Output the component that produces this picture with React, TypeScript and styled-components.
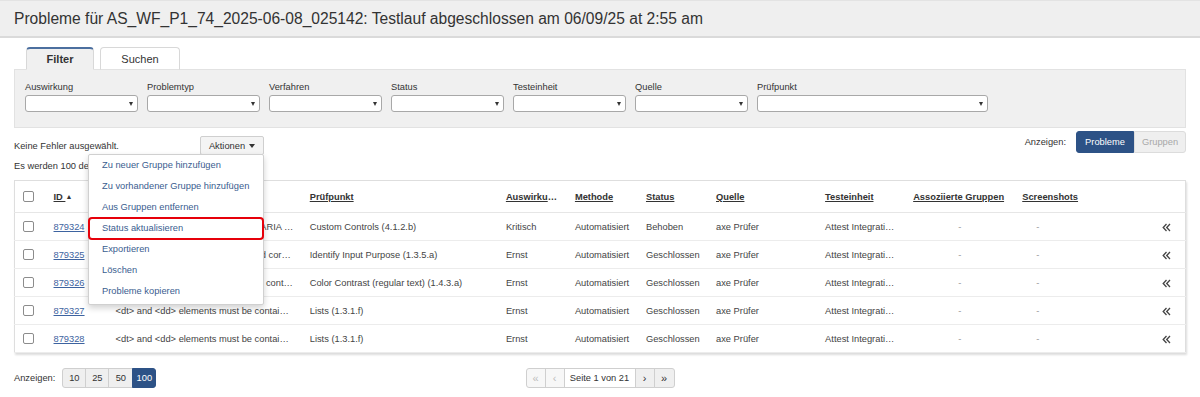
import React from "react";
import styled, { createGlobalStyle } from "styled-components";

const GlobalStyle = createGlobalStyle`
  body {
    margin: 0;
    background: #fff;
    font-family: "Liberation Sans", Arial, sans-serif;
    color: #333;
  }
`;

interface Row {
  id: string;
  desc: string;
  check: string;
  impact: string;
  status: string;
}

const rows: Row[] = [
  { id: "879324", desc: "Elements must only use supported ARIA attributes", check: "Custom Controls (4.1.2.b)", impact: "Kritisch", status: "Behoben" },
  { id: "879325", desc: "autocomplete attribute must be used correctly", check: "Identify Input Purpose (1.3.5.a)", impact: "Ernst", status: "Geschlossen" },
  { id: "879326", desc: "Elements must meet minimum color contrast ratio thresholds", check: "Color Contrast (regular text) (1.4.3.a)", impact: "Ernst", status: "Geschlossen" },
  { id: "879327", desc: "<dt> and <dd> elements must be contained by a <dl>", check: "Lists (1.3.1.f)", impact: "Ernst", status: "Geschlossen" },
  { id: "879328", desc: "<dt> and <dd> elements must be contained by a <dl>", check: "Lists (1.3.1.f)", impact: "Ernst", status: "Geschlossen" },
];

const filters = [
  { label: "Auswirkung", width: 113 },
  { label: "Problemtyp", width: 113 },
  { label: "Verfahren", width: 113 },
  { label: "Status", width: 113 },
  { label: "Testeinheit", width: 113 },
  { label: "Quelle", width: 113 },
  { label: "Prüfpunkt", width: 231 },
];

const menuItems = [
  "Zu neuer Gruppe hinzufügen",
  "Zu vorhandener Gruppe hinzufügen",
  "Aus Gruppen entfernen",
  "Status aktualisieren",
  "Exportieren",
  "Löschen",
  "Probleme kopieren",
];

const columns = [31, 62, 194, 196, 69, 71, 70, 109, 88, 109, 133, 38];

const DoubleLeft = () => (
  <svg width="9" height="9" viewBox="0 0 9 9" fill="none" stroke="#444" strokeWidth="1.3">
    <path d="M4.5 1 L1.2 4.5 L4.5 8" />
    <path d="M8 1 L4.7 4.5 L8 8" />
  </svg>
);

const App: React.FC = () => {
  return (
    <>
      <GlobalStyle />
      <TitleBar>
        Probleme für AS_WF_P1_74_2025-06-08_025142: Testlauf abgeschlossen am 06/09/25 at 2:55 am
      </TitleBar>
      <Content>
        <TabList>
          <Tab active width={68}>Filter</Tab>
          <Tab width={80}>Suchen</Tab>
        </TabList>
        <FilterPanel>
          {filters.map((f) => (
            <Field key={f.label} width={f.width}>
              <FieldLabel>{f.label}</FieldLabel>
              <SelectBox />
            </Field>
          ))}
        </FilterPanel>

        <ActionRow>
          <ActionLeft>
            <SelectionText>Keine Fehler ausgewählt.</SelectionText>
            <ActionsWrap>
              <ActionsButton>
                Aktionen <Caret />
              </ActionsButton>
              <Menu>
                {menuItems.map((m) => (
                  <MenuItem key={m} highlighted={m === "Status aktualisieren"}>
                    {m}
                  </MenuItem>
                ))}
              </Menu>
            </ActionsWrap>
          </ActionLeft>
          <ViewSwitch>
            <SmallLabel>Anzeigen:</SmallLabel>
            <ToggleGroup>
              <ToggleBtn active width={58}>Probleme</ToggleBtn>
              <ToggleBtn width={52}>Gruppen</ToggleBtn>
            </ToggleGroup>
          </ViewSwitch>
        </ActionRow>
        <InfoLine>Es werden 100 der 2050 Probleme angezeigt.</InfoLine>

        <Table>
          <colgroup>
            {columns.map((w, i) => (
              <col key={i} style={{ width: w }} />
            ))}
          </colgroup>
          <thead>
            <tr>
              <Th><Checkbox /></Th>
              <Th>ID <SortArrow>▲</SortArrow></Th>
              <Th />
              <Th>Prüfpunkt</Th>
              <Th>Auswirkung</Th>
              <Th>Methode</Th>
              <Th>Status</Th>
              <Th>Quelle</Th>
              <Th>Testeinheit</Th>
              <Th>Assoziierte Gruppen</Th>
              <Th>Screenshots</Th>
              <Th />
            </tr>
          </thead>
          <tbody>
            {rows.map((r) => (
              <tr key={r.id}>
                <Td><Checkbox /></Td>
                <Td><IdLink>{r.id}</IdLink></Td>
                <Td>{r.desc}</Td>
                <Td>{r.check}</Td>
                <Td>{r.impact}</Td>
                <Td>Automatisiert</Td>
                <Td>{r.status}</Td>
                <Td>axe Prüfer</Td>
                <Td>Attest Integration Tests</Td>
                <Td align="center" muted>-</Td>
                <Td muted indent={22}>-</Td>
                <Td align="center"><DoubleLeft /></Td>
              </tr>
            ))}
          </tbody>
        </Table>

        <Footer>
          <PageSize>
            <SmallLabel>Anzeigen:</SmallLabel>
            <ButtonGroup>
              <SizeBtn width={23}>10</SizeBtn>
              <SizeBtn width={23}>25</SizeBtn>
              <SizeBtn width={24}>50</SizeBtn>
              <SizeBtn width={23} active>100</SizeBtn>
            </ButtonGroup>
          </PageSize>
          <ButtonGroup>
            <PageBtn width={19} disabled>«</PageBtn>
            <PageBtn width={19} disabled>‹</PageBtn>
            <PageInfo>Seite 1 von 21</PageInfo>
            <PageBtn width={19}>›</PageBtn>
            <PageBtn width={20}>»</PageBtn>
          </ButtonGroup>
          <div />
        </Footer>
      </Content>
    </>
  );
};
export default App;

const TitleBar = styled.div`
  display: flex;
  align-items: center;
  height: 35px;
  padding-left: 14px;
  background: #efefef;
  border-top: 1px solid #e3e3e3;
  border-bottom: 2px solid #dadada;
  font-size: 15.6px;
  color: #333;
  white-space: nowrap;
`;

const Content = styled.div`
  padding: 0 14px;
`;

const TabList = styled.div`
  display: flex;
  gap: 6px;
  padding-left: 12px;
  margin-top: 9px;
  position: relative;
  z-index: 1;
`;

const Tab = styled.div<{ active?: boolean; width: number }>`
  box-sizing: border-box;
  width: ${(p) => p.width}px;
  height: 23px;
  margin-bottom: -1px;
  display: flex;
  align-items: center;
  justify-content: center;
  border: 1px solid #d8d8d8;
  border-top: ${(p) => (p.active ? "2px solid #4c6f9f" : "1px solid #d8d8d8")};
  border-bottom: ${(p) => (p.active ? "1px solid #f0f0f0" : "1px solid #e2e2e2")};
  border-radius: 4px 4px 0 0;
  background: ${(p) => (p.active ? "#f0f0f0" : "#fff")};
  font-size: 11px;
  font-weight: ${(p) => (p.active ? "bold" : "normal")};
  color: #333;
`;

const FilterPanel = styled.div`
  display: flex;
  gap: 9px;
  height: 57px;
  padding: 0 10px;
  background: #f0f0f0;
  border: 1px solid #e2e2e2;
  align-items: flex-start;
  & > * {
    margin-top: 11px;
  }
`;

const Field = styled.div<{ width: number }>`
  display: flex;
  flex-direction: column;
  width: ${(p) => p.width}px;
`;

const FieldLabel = styled.label`
  font-size: 9.3px;
  line-height: 12px;
  margin-bottom: 2px;
  color: #333;
`;

const SelectBox = styled.div`
  position: relative;
  box-sizing: border-box;
  height: 17px;
  background: #fff;
  border: 1px solid #a8a8a8;
  border-radius: 3px;
  &::after {
    content: "";
    position: absolute;
    right: 4px;
    top: 6px;
    border-left: 2.5px solid transparent;
    border-right: 2.5px solid transparent;
    border-top: 4px solid #333;
  }
`;

const ActionRow = styled.div`
  display: flex;
  justify-content: space-between;
  align-items: flex-start;
  height: 24px;
  margin-top: 3px;
`;

const ActionLeft = styled.div`
  display: flex;
  align-items: flex-start;
`;

const SelectionText = styled.div`
  width: 186px;
  padding-top: 9px;
  font-size: 9.3px;
  line-height: 12px;
  color: #333;
`;

const ActionsWrap = styled.div`
  position: relative;
  margin-top: 5px;
`;

const ActionsButton = styled.div`
  box-sizing: border-box;
  display: flex;
  align-items: center;
  justify-content: center;
  gap: 4px;
  width: 64px;
  height: 19px;
  background: #f4f4f4;
  border: 1px solid #cfcfcf;
  border-radius: 2px;
  font-size: 9.3px;
  color: #333;
`;

const Caret = styled.span`
  display: inline-block;
  border-left: 3px solid transparent;
  border-right: 3px solid transparent;
  border-top: 4px solid #333;
`;

const Menu = styled.div`
  position: absolute;
  right: 0;
  top: 18px;
  z-index: 5;
  width: 176px;
  box-sizing: border-box;
  padding: 0 0 2px;
  background: #fff;
  border: 1px solid #d0d0d0;
  border-radius: 2px;
  box-shadow: 0 3px 6px rgba(0, 0, 0, 0.18);
`;

const MenuItem = styled.div<{ highlighted?: boolean }>`
  height: 21px;
  line-height: 21px;
  padding-left: 13px;
  font-size: 9.3px;
  color: #3a5d8f;
  white-space: nowrap;
  border-radius: 3px;
  outline: ${(p) => (p.highlighted ? "2px solid #e6000a" : "none")};
  outline-offset: -1px;
`;

const ViewSwitch = styled.div`
  display: flex;
  align-items: center;
  gap: 10px;
`;

const SmallLabel = styled.span`
  font-size: 9.3px;
  color: #333;
`;

const ToggleGroup = styled.div`
  display: flex;
`;

const ToggleBtn = styled.div<{ active?: boolean; width: number }>`
  box-sizing: border-box;
  width: ${(p) => p.width}px;
  height: 22px;
  display: flex;
  align-items: center;
  justify-content: center;
  font-size: 9.3px;
  background: ${(p) => (p.active ? "#2d5286" : "#efefef")};
  color: ${(p) => (p.active ? "#fff" : "#a8a8a8")};
  border: 1px solid ${(p) => (p.active ? "#2d5286" : "#dcdcdc")};
  &:first-child {
    border-radius: 3px 0 0 3px;
  }
  &:last-child {
    border-radius: 0 3px 3px 0;
  }
`;

const InfoLine = styled.div`
  margin: 4px 0 7px;
  font-size: 9.3px;
  line-height: 14px;
  color: #333;
`;

const Table = styled.table`
  width: 100%;
  table-layout: fixed;
  border-collapse: collapse;
  border: 1px solid #dedede;
  box-shadow: 1px 2px 2px rgba(0, 0, 0, 0.14);
`;

const Th = styled.th`
  height: 31px;
  padding: 0 8px;
  text-align: left;
  font-size: 9.3px;
  font-weight: bold;
  color: #333;
  text-decoration: underline;
  white-space: nowrap;
  overflow: hidden;
  text-overflow: ellipsis;
  border-bottom: 1px solid #e6e6e6;
`;

const SortArrow = styled.span`
  font-size: 7px;
  text-decoration: none;
  display: inline-block;
  vertical-align: 1px;
`;

const Td = styled.td<{ align?: string; muted?: boolean; indent?: number }>`
  height: 27px;
  padding: 0 8px;
  padding-left: ${(p) => (p.indent ? p.indent : 8)}px;
  text-align: ${(p) => p.align || "left"};
  font-size: 9.3px;
  color: ${(p) => (p.muted ? "#999" : "#444")};
  white-space: nowrap;
  overflow: hidden;
  text-overflow: ellipsis;
  border-bottom: 1px solid #ececec;
  svg {
    display: inline-block;
    vertical-align: middle;
  }
`;

const Checkbox = styled.span`
  display: block;
  box-sizing: border-box;
  width: 11px;
  height: 11px;
  background: #fff;
  border: 1px solid #8c8c8c;
  border-radius: 2px;
`;

const IdLink = styled.a`
  color: #3d63a0;
  text-decoration: underline;
`;

const Footer = styled.div`
  display: grid;
  grid-template-columns: 1fr auto 1fr;
  align-items: center;
  margin-top: 15px;
`;

const PageSize = styled.div`
  display: flex;
  align-items: center;
  gap: 7px;
`;

const ButtonGroup = styled.div`
  display: flex;
  & > * + * {
    margin-left: -1px;
  }
  & > *:first-child {
    border-radius: 3px 0 0 3px;
  }
  & > *:last-child {
    border-radius: 0 3px 3px 0;
  }
`;

const SizeBtn = styled.div<{ active?: boolean; width: number }>`
  box-sizing: border-box;
  width: ${(p) => p.width + 1}px;
  height: 20px;
  display: flex;
  align-items: center;
  justify-content: center;
  font-size: 9.3px;
  background: ${(p) => (p.active ? "#2d5286" : "#efefef")};
  color: ${(p) => (p.active ? "#fff" : "#333")};
  border: 1px solid ${(p) => (p.active ? "#2d5286" : "#cfcfcf")};
`;

const PageBtn = styled.div<{ disabled?: boolean; width: number }>`
  box-sizing: border-box;
  width: ${(p) => p.width + 1}px;
  height: 20px;
  display: flex;
  align-items: center;
  justify-content: center;
  font-size: 11px;
  background: ${(p) => (p.disabled ? "#f7f7f7" : "#efefef")};
  color: ${(p) => (p.disabled ? "#bdbdbd" : "#333")};
  border: 1px solid #cfcfcf;
`;

const PageInfo = styled.div`
  box-sizing: border-box;
  width: 72px;
  height: 20px;
  display: flex;
  align-items: center;
  justify-content: center;
  font-size: 9.3px;
  background: #fff;
  color: #333;
  border: 1px solid #cfcfcf;
`;
